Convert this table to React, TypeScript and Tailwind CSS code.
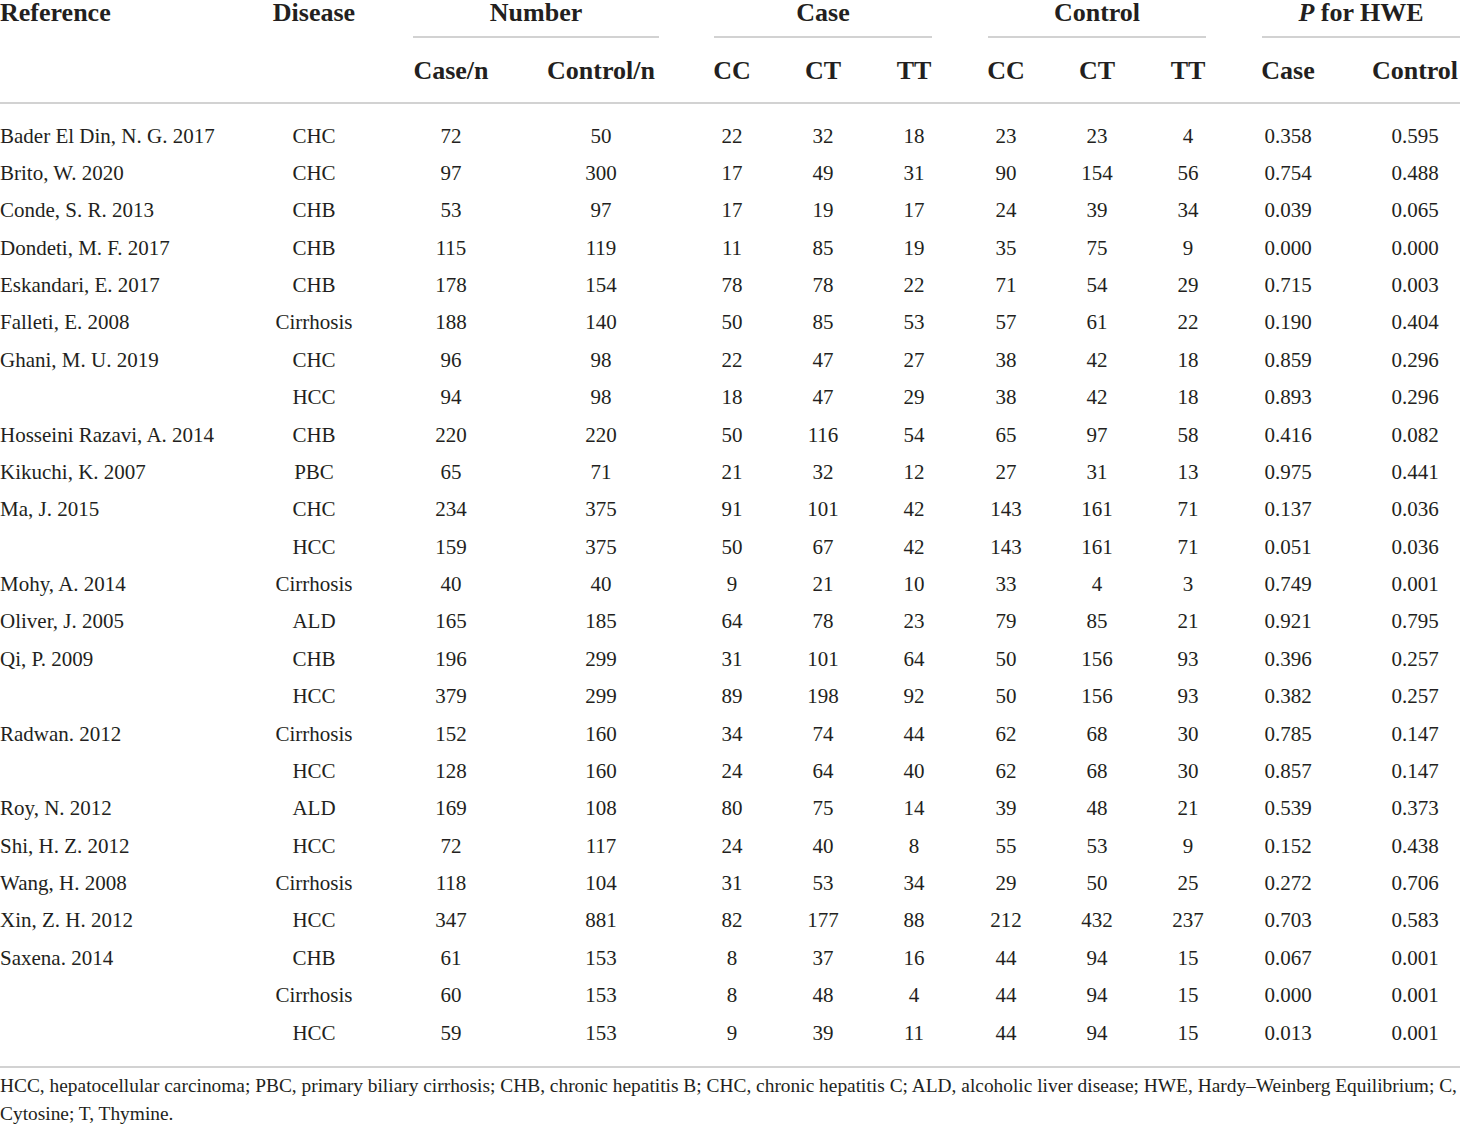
const rows: string[][] = [
  ["Bader El Din, N. G. 2017", "CHC", "72", "50", "22", "32", "18", "23", "23", "4", "0.358", "0.595"],
  ["Brito, W. 2020", "CHC", "97", "300", "17", "49", "31", "90", "154", "56", "0.754", "0.488"],
  ["Conde, S. R. 2013", "CHB", "53", "97", "17", "19", "17", "24", "39", "34", "0.039", "0.065"],
  ["Dondeti, M. F. 2017", "CHB", "115", "119", "11", "85", "19", "35", "75", "9", "0.000", "0.000"],
  ["Eskandari, E. 2017", "CHB", "178", "154", "78", "78", "22", "71", "54", "29", "0.715", "0.003"],
  ["Falleti, E. 2008", "Cirrhosis", "188", "140", "50", "85", "53", "57", "61", "22", "0.190", "0.404"],
  ["Ghani, M. U. 2019", "CHC", "96", "98", "22", "47", "27", "38", "42", "18", "0.859", "0.296"],
  ["", "HCC", "94", "98", "18", "47", "29", "38", "42", "18", "0.893", "0.296"],
  ["Hosseini Razavi, A. 2014", "CHB", "220", "220", "50", "116", "54", "65", "97", "58", "0.416", "0.082"],
  ["Kikuchi, K. 2007", "PBC", "65", "71", "21", "32", "12", "27", "31", "13", "0.975", "0.441"],
  ["Ma, J. 2015", "CHC", "234", "375", "91", "101", "42", "143", "161", "71", "0.137", "0.036"],
  ["", "HCC", "159", "375", "50", "67", "42", "143", "161", "71", "0.051", "0.036"],
  ["Mohy, A. 2014", "Cirrhosis", "40", "40", "9", "21", "10", "33", "4", "3", "0.749", "0.001"],
  ["Oliver, J. 2005", "ALD", "165", "185", "64", "78", "23", "79", "85", "21", "0.921", "0.795"],
  ["Qi, P. 2009", "CHB", "196", "299", "31", "101", "64", "50", "156", "93", "0.396", "0.257"],
  ["", "HCC", "379", "299", "89", "198", "92", "50", "156", "93", "0.382", "0.257"],
  ["Radwan. 2012", "Cirrhosis", "152", "160", "34", "74", "44", "62", "68", "30", "0.785", "0.147"],
  ["", "HCC", "128", "160", "24", "64", "40", "62", "68", "30", "0.857", "0.147"],
  ["Roy, N. 2012", "ALD", "169", "108", "80", "75", "14", "39", "48", "21", "0.539", "0.373"],
  ["Shi, H. Z. 2012", "HCC", "72", "117", "24", "40", "8", "55", "53", "9", "0.152", "0.438"],
  ["Wang, H. 2008", "Cirrhosis", "118", "104", "31", "53", "34", "29", "50", "25", "0.272", "0.706"],
  ["Xin, Z. H. 2012", "HCC", "347", "881", "82", "177", "88", "212", "432", "237", "0.703", "0.583"],
  ["Saxena. 2014", "CHB", "61", "153", "8", "37", "16", "44", "94", "15", "0.067", "0.001"],
  ["", "Cirrhosis", "60", "153", "8", "48", "4", "44", "94", "15", "0.000", "0.001"],
  ["", "HCC", "59", "153", "9", "39", "11", "44", "94", "15", "0.013", "0.001"],
];

// cell width + spacing for each column (centres follow the original table)
const cols = [
  "w-[262px] text-left",
  "ml-[2px] w-[100px] text-center",
  "ml-[42px] w-[90px] text-center",
  "ml-[45px] w-[120px] text-center",
  "ml-[41px] w-[60px] text-center",
  "ml-[31px] w-[60px] text-center",
  "ml-[31px] w-[60px] text-center",
  "ml-[32px] w-[60px] text-center",
  "ml-[31px] w-[60px] text-center",
  "ml-[31px] w-[60px] text-center",
  "ml-[25px] w-[90px] text-center",
  "ml-[37px] w-[90px] text-center",
];

const subHeads = ["", "", "Case/n", "Control/n", "CC", "CT", "TT", "CC", "CT", "TT", "Case", "Control"];

export default function App() {
  return (
    <div
      className="w-[1460px] bg-white text-[#231f20] overflow-hidden"
      style={{ fontFamily: '"Liberation Serif", "Times New Roman", serif' }}
    >
      {/* Kopf */}
      <div className="border-b-2 border-[#d2d2d2]">
        <div className="flex h-[39px] text-[26px] font-bold leading-[25px]">
          <div className="w-[262px]">Reference</div>
          <div className="ml-[2px] w-[100px] text-center">Disease</div>
          <div className="ml-[49px] w-[246px] h-[38px] text-center border-b-2 border-[#d2d2d2]">Number</div>
          <div className="ml-[55px] w-[218px] h-[38px] text-center border-b-2 border-[#d2d2d2]">Case</div>
          <div className="ml-[56px] w-[218px] h-[38px] text-center border-b-2 border-[#d2d2d2]">Control</div>
          <div className="ml-[56px] w-[198px] h-[38px] text-center border-b-2 border-[#d2d2d2]">
            <span className="italic">P</span> for HWE
          </div>
        </div>
        <div className="flex h-[63px] pt-[21px] text-[26px] font-bold leading-[22px]">
          {subHeads.map((h, i) => (
            <div key={i} className={cols[i]}>
              {h}
            </div>
          ))}
        </div>
      </div>

      {/* Daten */}
      <div className="pt-[13.5px] pb-[14px] border-b-2 border-[#d2d2d2] text-[21px]">
        {rows.map((r, ri) => (
          <div key={ri} className="flex h-[37.375px] leading-[37.375px] whitespace-nowrap">
            {r.map((c, ci) => (
              <div key={ci} className={cols[ci]}>
                {c}
              </div>
            ))}
          </div>
        ))}
      </div>

      <p className="pt-[4px] text-[19.4px] leading-[28px] whitespace-nowrap">
        HCC, hepatocellular carcinoma; PBC, primary biliary cirrhosis; CHB, chronic hepatitis B; CHC, chronic
        hepatitis C; ALD, alcoholic liver disease; HWE, Hardy–Weinberg Equilibrium; C,
        <br />
        Cytosine; T, Thymine.
      </p>
    </div>
  );
}
